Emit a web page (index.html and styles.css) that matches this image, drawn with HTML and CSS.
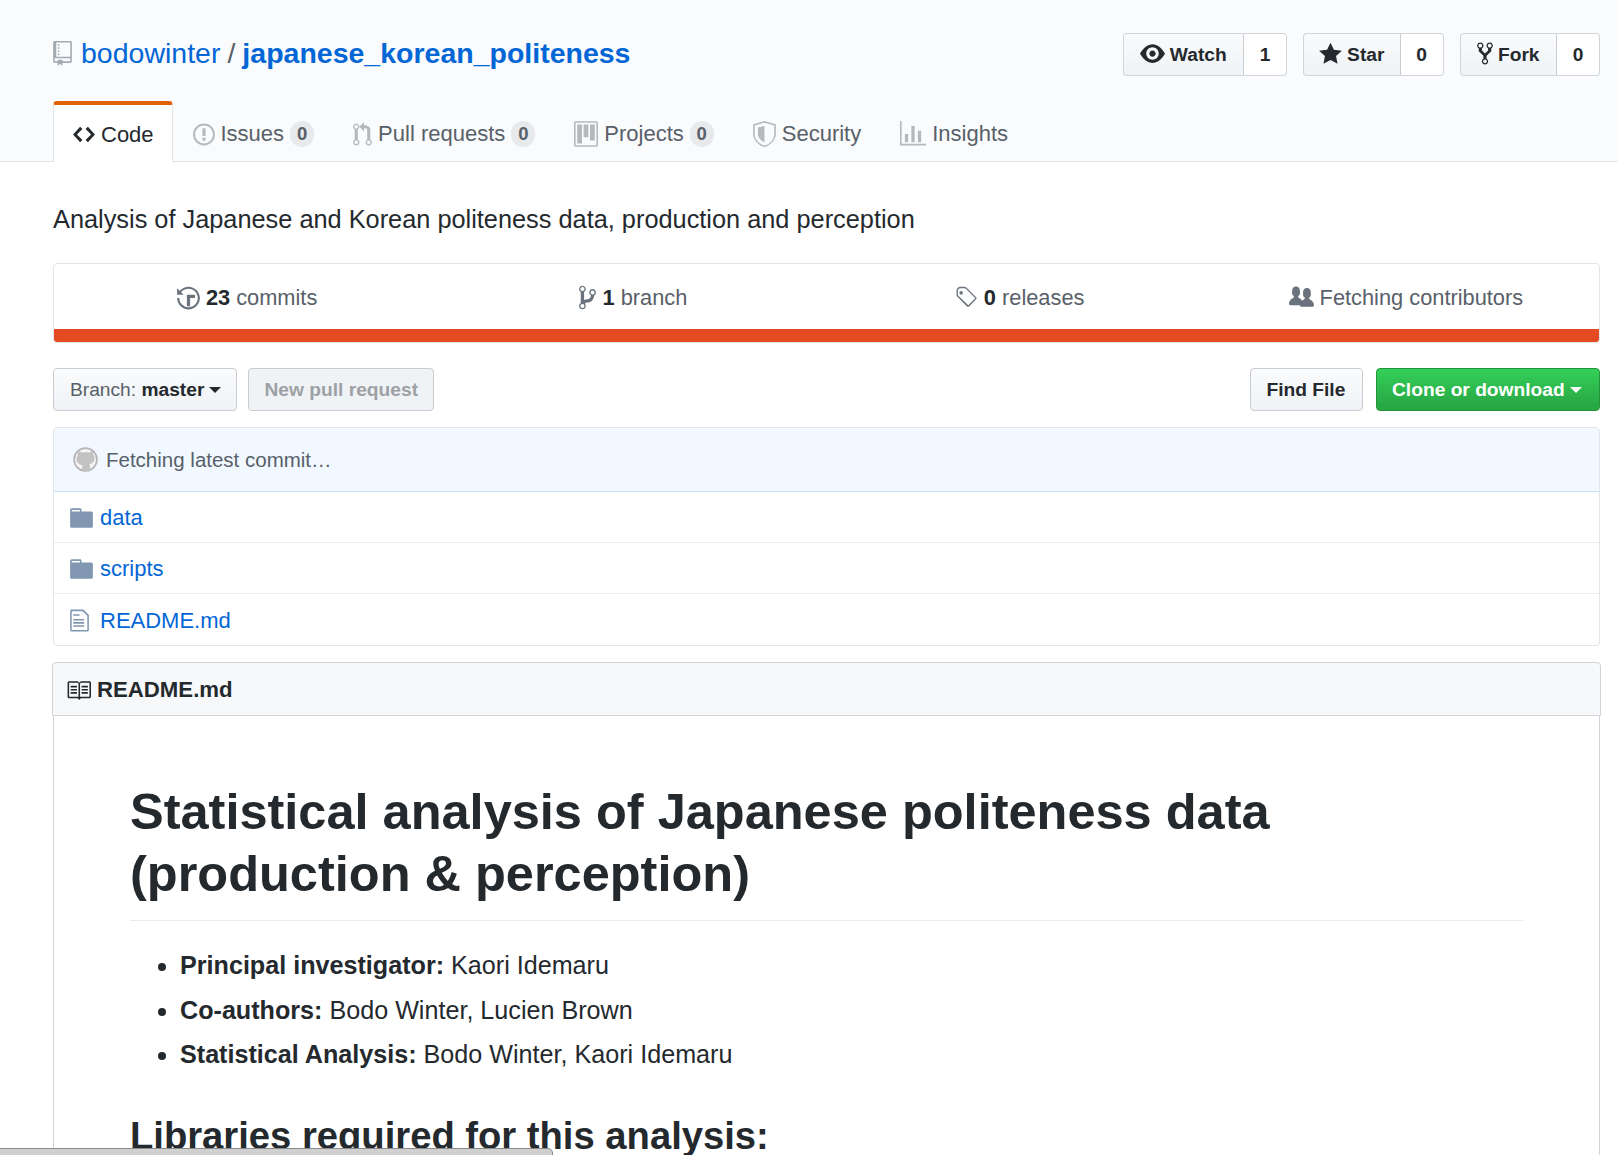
FILE: index.html
```html
<!DOCTYPE html>
<html lang="en">
<head>
<meta charset="utf-8">
<title>japanese_korean_politeness</title>
<link rel="stylesheet" href="styles.css">
</head>
<body>
<header class="repohead">
  <div class="head-top">
    <h1 class="title">
      <svg class="ico repo-ico" viewBox="0 0 12 16"><path fill="#a3aab1" fill-rule="evenodd" d="M4 9H3V8h1v1zm0-3H3v1h1V6zm0-2H3v1h1V4zm0-2H3v1h1V2zm8-1v12c0 .55-.45 1-1 1H6v2l-1.5-1.5L3 16v-2H1c-.55 0-1-.45-1-1V1c0-.55.45-1 1-1h10c.55 0 1 .45 1 1zm-1 10H1v2h2v-1h3v1h5v-2zm0-10H2v9h9V1z"/></svg>
      <a class="owner">bodowinter</a><span class="sep">/</span><a class="name">japanese_korean_politeness</a>
    </h1>
    <div class="actions">
      <div class="social w-watch"><span class="s-btn"><svg class="ico eye" viewBox="0 0 16 16"><path fill="#24292e" fill-rule="evenodd" d="M8.060 2C3 2 0 8 0 8s3 6 8.060 6C13 14 16 8 16 8s-3-6-7.940-6zM8 12c-2.200 0-4-1.780-4-4 0-2.200 1.800-4 4-4 2.220 0 4 1.800 4 4 0 2.220-1.780 4-4 4zm2-4c0 1.110-.890 2-2 2-1.110 0-2-.890-2-2 0-1.110.890-2 2-2 1.110 0 2 .890 2 2z"/></svg>Watch</span><span class="s-count">1</span></div>
      <div class="social w-star"><span class="s-btn"><svg class="ico star" viewBox="0 0 14 16"><path fill="#24292e" fill-rule="evenodd" d="M14 6l-4.900-.640L7 1 4.900 5.360 0 6l3.600 3.260L2.670 14 7 11.670 11.330 14l-.930-4.740L14 6z"/></svg>Star</span><span class="s-count">0</span></div>
      <div class="social w-fork"><span class="s-btn"><svg class="ico fork" viewBox="0 0 10 16"><path fill="#24292e" fill-rule="evenodd" d="M8 1a1.993 1.993 0 0 0-1 3.720V6L5 8 3 6V4.720A1.993 1.993 0 0 0 2 1a1.993 1.993 0 0 0-1 3.720V6.500l3 3v1.780A1.993 1.993 0 0 0 5 15a1.993 1.993 0 0 0 1-3.720V9.500l3-3V4.720A1.993 1.993 0 0 0 8 1zM2 4.200C1.340 4.200.8 3.650.8 3c0-.650.550-1.200 1.200-1.200.650 0 1.200.550 1.200 1.200 0 .650-.550 1.200-1.200 1.200zm3 10c-.660 0-1.200-.550-1.200-1.200 0-.650.550-1.200 1.200-1.200.650 0 1.200.550 1.200 1.200 0 .650-.550 1.200-1.200 1.200zm3-10c-.660 0-1.200-.550-1.200-1.200 0-.650.550-1.200 1.200-1.200.650 0 1.200.550 1.200 1.200 0 .650-.550 1.200-1.200 1.200z"/></svg>Fork</span><span class="s-count">0</span></div>
    </div>
  </div>
  <nav class="tabs">
    <a class="tab selected"><svg class="ico t-code" viewBox="0 0 14 16"><path fill="#24292e" fill-rule="evenodd" d="M9.500 3L8 4.500 11.500 8 8 11.500 9.500 13 14 8 9.500 3zm-5 0L0 8l4.500 5L6 11.500 2.500 8 6 4.500 4.500 3z"/></svg>Code</a>
    <a class="tab"><svg class="ico t-issue" viewBox="0 0 14 16"><path fill="#b6b9bc" fill-rule="evenodd" d="M7 2.300c3.140 0 5.700 2.560 5.700 5.700s-2.560 5.700-5.700 5.700A5.710 5.710 0 0 1 1.300 8c0-3.140 2.560-5.700 5.700-5.700zM7 1C3.140 1 0 4.140 0 8s3.140 7 7 7 7-3.140 7-7-3.140-7-7-7zm1 3H6v5h2V4zm0 6H6v2h2v-2z"/></svg>Issues<span class="counter">0</span></a>
    <a class="tab"><svg class="ico t-pr" viewBox="0 0 12 16"><path fill="#b6b9bc" fill-rule="evenodd" d="M11 11.280V5c-.030-.780-.340-1.470-.940-2.060C9.460 2.350 8.780 2.030 8 2H7V0L4 3l3 3V4h1c.270.020.480.110.690.310.210.200.300.420.310.690v6.280A1.993 1.993 0 0 0 10 15a1.993 1.993 0 0 0 1-3.720zm-1 2.920c-.660 0-1.200-.550-1.200-1.200 0-.650.550-1.200 1.200-1.200.650 0 1.200.550 1.200 1.200 0 .650-.550 1.200-1.200 1.200zM4 3c0-1.110-.890-2-2-2a1.993 1.993 0 0 0-1 3.720v6.560A1.993 1.993 0 0 0 2 15a1.993 1.993 0 0 0 1-3.720V4.720c.590-.340 1-.980 1-1.720zm-.800 10c0 .660-.550 1.200-1.200 1.200-.650 0-1.200-.550-1.200-1.200 0-.650.550-1.200 1.200-1.200.650 0 1.200.550 1.200 1.200zM2 4.200C1.340 4.200.8 3.650.8 3c0-.650.550-1.200 1.200-1.200.650 0 1.200.550 1.200 1.200 0 .650-.550 1.200-1.200 1.200z"/></svg>Pull requests<span class="counter">0</span></a>
    <a class="tab"><svg class="ico t-proj" viewBox="0 0 15 16"><path fill="#b6b9bc" fill-rule="evenodd" d="M10 12h3V2h-3v10zm-4-2h3V2H6v8zm-4 4h3V2H2v12zm-1 1h13V1H1v14zM14 0H1a1 1 0 0 0-1 1v14a1 1 0 0 0 1 1h13a1 1 0 0 0 1-1V1a1 1 0 0 0-1-1z"/></svg>Projects<span class="counter">0</span></a>
    <a class="tab"><svg class="ico t-sec" viewBox="0 0 14 16"><path fill="#b6b9bc" fill-rule="evenodd" d="M0 2l7-2 7 2v6.020C14 12.690 8.670 16 7 16c-1.670 0-7-3.310-7-7.980V2zm1 .750L7 1l6 1.750v5.680c0 3.880-4.540 6.570-6 6.570S1 12.310 1 8.430V2.750zM3 4l4-1v10c-1.110 0-4-2.110-4-4.930V4z"/></svg>Security</a>
    <a class="tab"><svg class="ico t-ins" viewBox="0 0 16 16"><path fill="#b6b9bc" fill-rule="evenodd" d="M16 14v1H0V0h1v14h15zM5 13H3V8h2v5zm4 0H7V3h2v10zm4 0h-2V6h2v7z"/></svg>Insights</a>
  </nav>
</header>

<main class="container">
  <p class="desc">Analysis of Japanese and Korean politeness data, production and perception</p>

  <section class="overall">
    <ul class="stats">
      <li><svg class="ico st-hist" viewBox="0 0 14 16"><path fill="#6a737d" fill-rule="evenodd" d="M8 13H6V6h5v2H8v5zM7 1C4.810 1 2.870 2.020 1.590 3.590L0 2v4h4L2.460 4.460C3.460 3.170 5.130 2.300 7 2.300c3.140 0 5.700 2.560 5.700 5.700s-2.560 5.700-5.700 5.700A5.710 5.710 0 0 1 1.300 8H0c0 3.860 3.140 7 7 7s7-3.140 7-7-3.140-7-7-7z"/></svg><b>23</b> commits</li>
      <li><svg class="ico st-branch" viewBox="0 0 10 16"><path fill="#6a737d" fill-rule="evenodd" d="M10 5c0-1.110-.890-2-2-2a1.993 1.993 0 0 0-1 3.720v.300c-.020.520-.230.980-.630 1.380-.400.400-.860.610-1.380.630-.830.020-1.480.160-2 .450V4.720A1.993 1.993 0 0 0 2 1a1.993 1.993 0 0 0-1 3.720v6.560c-.590.350-1 .990-1 1.720 0 1.110.890 2 2 2 1.110 0 2-.890 2-2 0-.530-.200-1-.530-1.360.090-.060.480-.410.590-.470.250-.110.560-.170.940-.170 1.050-.050 1.950-.450 2.750-1.250S8.950 7.770 9 6.730h-.020C9.590 6.370 10 5.730 10 5zM2 1.800c.660 0 1.200.550 1.200 1.200 0 .650-.550 1.200-1.200 1.200C1.350 4.200.8 3.650.8 3c0-.650.550-1.200 1.200-1.200zm0 12.410c-.660 0-1.200-.550-1.200-1.200 0-.650.550-1.200 1.200-1.200.650 0 1.200.550 1.200 1.200 0 .650-.550 1.200-1.200 1.200zm6-8c-.660 0-1.200-.550-1.200-1.200 0-.650.550-1.200 1.200-1.200.650 0 1.200.550 1.200 1.200 0 .650-.550 1.200-1.200 1.200z"/></svg><b>1</b> branch</li>
      <li><svg class="ico st-tag" viewBox="0 0 15 16"><path fill="#6a737d" fill-rule="evenodd" d="M7.730 1.730C7.260 1.260 6.620 1 5.960 1H3.500C2.130 1 1 2.130 1 3.500v2.470c0 .660.270 1.300.730 1.770l6.060 6.060c.390.390 1.020.390 1.410 0l4.590-4.590a.996.996 0 0 0 0-1.410L7.730 1.730zM2.380 7.090c-.310-.300-.480-.710-.480-1.120V3.500c0-.880.720-1.600 1.600-1.600h2.470c.420 0 .830.170 1.130.470l6.140 6.130-4.590 4.590-6.270-6zM3 4h2v2H3V4z"/></svg><b>0</b> releases</li>
      <li><svg class="ico st-org" viewBox="0 0 16 16"><path fill="#6a737d" fill-rule="evenodd" d="M16 12.999c0 .439-.450 1-1 1H7.995c-.539 0-.994-.447-.995-.999H1c-.540 0-1-.561-1-1 0-2.634 3-4 3-4s.229-.409 0-1c-.841-.621-1.058-.590-1-3 .058-2.419 1.367-3 2.500-3s2.442.580 2.500 3c.058 2.410-.159 2.379-1 3-.229.590 0 1 0 1s1.549.711 2.420 2.088C9.196 9.369 10 8.999 10 8.999s.229-.409 0-1c-.841-.620-1.058-.590-1-3 .058-2.419 1.367-3 2.500-3s2.437.581 2.495 3c.059 2.410-.158 2.380-1 3-.229.590 0 1 0 1S16 10.365 16 12.999z"/></svg>Fetching contributors</li>
    </ul>
    <div class="langbar"></div>
  </section>

  <div class="file-nav">
    <a class="btn branch-btn">Branch: <b>master</b><i class="caret"></i></a>
    <a class="btn disabled">New pull request</a>
    <span class="spacer"></span>
    <a class="btn find">Find File</a>
    <a class="btn primary">Clone or download<i class="caret"></i></a>
  </div>

  <section class="files">
    <div class="tease">
      <span class="avatar"><svg viewBox="0 0 16 16"><circle cx="8" cy="8" r="7.300" fill="#f4f4f4" stroke="#b4b4b4" stroke-width="1.100"/><path fill="#c2c2c2" d="M3.200 2.600c1 0 1.900.6 2.500 1.100.7-.2 1.500-.3 2.300-.3s1.600.1 2.300.3c.6-.5 1.500-1.100 2.500-1.100.3.8.3 1.600.1 2.200.6.7.9 1.500.9 2.400 0 2.600-1.700 3.500-3.500 3.800.3.4.5.9.5 1.500v3H5.800v-2.200c0-.5.2-1 .5-1.600-1.800-.3-4.100-1.400-4.100-4.100 0-.9.3-1.700.9-2.400-.2-.6-.2-1.500.1-2.600z"/></svg></span>
      <span>Fetching latest commit…</span>
    </div>
    <div class="row"><svg class="ico f-dir" viewBox="0 0 14 16"><path fill="#8197b1" fill-rule="evenodd" d="M13 4H7V3c0-.660-.310-1-1-1H1c-.550 0-1 .450-1 1v10c0 .550.450 1 1 1h12c.550 0 1-.450 1-1V5c0-.550-.450-1-1-1zM6 4H1V3h5v1z"/></svg><a>data</a></div>
    <div class="row"><svg class="ico f-dir" viewBox="0 0 14 16"><path fill="#8197b1" fill-rule="evenodd" d="M13 4H7V3c0-.660-.310-1-1-1H1c-.550 0-1 .450-1 1v10c0 .550.450 1 1 1h12c.550 0 1-.450 1-1V5c0-.550-.450-1-1-1zM6 4H1V3h5v1z"/></svg><a>scripts</a></div>
    <div class="row"><svg class="ico f-file" viewBox="0 0 12 16"><path fill="#8197b1" fill-rule="evenodd" d="M6 5H2V4h4v1zM2 8h7V7H2v1zm0 2h7V9H2v1zm0 2h7v-1H2v1zm10-7.500V14c0 .550-.450 1-1 1H1c-.550 0-1-.450-1-1V2c0-.550.450-1 1-1h7.500L12 4.500zM11 5L8 2H1v12h10V5z"/></svg><a>README.md</a></div>
  </section>

  <section class="readme">
    <h3 class="readme-head"><svg class="ico r-book" viewBox="0 0 16 16"><path fill="#24292e" fill-rule="evenodd" d="M3 5h4v1H3V5zm0 3h4V7H3v1zm0 2h4V9H3v1zm11-5h-4v1h4V5zm0 2h-4v1h4V7zm0 2h-4v1h4V9zm2-6v9c0 .550-.450 1-1 1H9.500l-1 1-1-1H2c-.550 0-1-.450-1-1V3c0-.550.450-1 1-1h5.500l1 1 1-1H15c.550 0 1 .450 1 1zm-8 .500L7.500 3H2v9h6V3.500zm7-.500H9.500l-.500.500V12h6V3z"/></svg>README.md</h3>
    <article class="md">
      <h1>Statistical analysis of Japanese politeness data (production &amp; perception)</h1>
      <ul>
        <li><strong>Principal investigator:</strong> Kaori Idemaru</li>
        <li><strong>Co-authors:</strong> Bodo Winter, Lucien Brown</li>
        <li><strong>Statistical Analysis:</strong> Bodo Winter, Kaori Idemaru</li>
      </ul>
      <h2>Libraries required for this analysis:</h2>
    </article>
  </section>
</main>
<div class="status"></div>
</body>
</html>
```
FILE: styles.css
```css
* { box-sizing: border-box; }
html, body { margin: 0; padding: 0; height: 1155px; overflow: hidden; background: #fff; }
body { font-family: "Liberation Sans", Arial, sans-serif; font-size: 21.8px; color: #24292e; position: relative; }
a { color: #0366d6; text-decoration: none; }
ul { list-style: none; margin: 0; padding: 0; }
.ico { display: block; flex: none; }

.repohead { height: 162px; background: #fafbfc; border-bottom: 1px solid #e1e4e8; padding: 33px 18px 0 53px; }
.head-top { display: flex; justify-content: space-between; height: 43px; }
.title { margin: 0; font-size: 28.5px; font-weight: 400; display: flex; align-items: center; height: 41px; color: #586069; }
.repo-ico { width: 19px; height: 25px; margin-right: 9px; }
.sep { margin: 0 7px; }
.name { font-weight: 700; }
.actions { display: flex; gap: 16px; }
.social { display: flex; height: 43px; font-size: 19.2px; font-weight: 700; }
.s-btn { display: flex; align-items: center; justify-content: center; gap: 5px; background: linear-gradient(#fafbfc, #eff3f6); border: 1px solid #d1d5da; border-right: 1px solid #c9ccd0; border-radius: 4px 0 0 4px; }
.s-count { display: flex; align-items: center; justify-content: center; background: #fff; border: 1px solid #d1d5da; border-left: 0; border-radius: 0 4px 4px 0; }
.s-btn .ico { margin-bottom: 2px; }
.w-watch .s-btn { width: 121.5px; } .w-watch .s-count { width: 43px; }
.w-star .s-btn { width: 97.5px; } .w-star .s-count { width: 43px; }
.w-fork .s-btn { width: 97.5px; } .w-fork .s-count { width: 43px; }
.eye { width: 25px; height: 25px; }
.star { width: 23px; height: 26px; }
.fork { width: 16px; height: 25px; }

.tabs { display: flex; margin-top: 25px; height: 60px; font-size: 22px; }
.tab { display: flex; align-items: center; color: #586069; height: 60px; padding: 2px 19.5px 0; border-top: 4px solid transparent; }
.tab.selected { width: 120px; height: 61px; padding-left: 19px; background: #fff; color: #24292e; border: 1px solid #e1e4e8; border-top: 4px solid #e36209; border-bottom: 0; border-radius: 4px 4px 0 0; }
.tab .ico { margin-right: 6px; }
.t-code { width: 22px; height: 25px; }
.t-issue { width: 22px; height: 25px; }
.t-pr { width: 19px; height: 25px; }
.t-proj { width: 24px; height: 26px; }
.t-sec { width: 23px; height: 26px; }
.t-ins { width: 26px; height: 26px; }
.counter { display: inline-flex; align-items: center; justify-content: center; width: 24px; height: 26px; margin-left: 6px; border-radius: 13px; background: rgba(27,31,35,.08); font-size: 18.5px; font-weight: 700; color: #586069; }

.container { padding: 0 18px 0 53px; }
.desc { margin: 0; height: 101px; padding-top: 40px; font-size: 25.33px; line-height: 35px; color: #24292e; }
.overall { height: 80px; border: 1px solid #e1e4e8; border-radius: 4px; overflow: hidden; display: flex; flex-direction: column; }
.stats { display: grid; grid-template-columns: repeat(4, 1fr); height: 65px; padding-top: 2px; color: #586069; flex: none; }
.stats li { display: flex; align-items: center; justify-content: center; white-space: pre; }
.stats b { color: #24292e; }
.stats .ico { margin-right: 6px; }
.st-hist { width: 23px; height: 26px; }
.st-branch { width: 17px; height: 27px; }
.st-tag { width: 23px; height: 25px; }
.st-org { width: 25px; height: 25px; }
.langbar { flex: 1; background: #e44b23; }

.file-nav { display: flex; gap: 10.5px; margin-top: 25px; height: 43px; }
.spacer { flex: 1; }
.btn { display: flex; align-items: center; height: 43px; padding: 0 16px; font-size: 19.2px; font-weight: 700; color: #24292e; background: linear-gradient(#fafbfc, #eff3f6); border: 1px solid #c9ccd0; border-radius: 4px; white-space: pre; }
.branch-btn { width: 184px; font-weight: 400; color: #586069; }
.branch-btn b { color: #24292e; }
.caret { display: block; width: 0; height: 0; margin-left: 5px; border: 6.300px solid transparent; border-top-color: currentColor; border-bottom: 0; color: #24292e; }
.btn.disabled { width: 186.5px; color: #9da1a5; background: #eff3f6; }
.find { width: 113px; margin-right: 3px; }
.primary { width: 224px; padding: 0 15px; color: #fff; background: linear-gradient(#34d058, #28a745 90%); border-color: #23933c; }
.primary .caret { color: #fff; }

.files { margin-top: 16px; border: 1px solid #e1e4e8; border-radius: 4px; overflow: hidden; }
.tease { display: flex; align-items: center; gap: 8px; height: 65px; padding-left: 19px; margin: -1px -1px 0; background: #f1f8ff; border: 1px solid #c8e1ff; color: #586069; font-size: 20.5px; }
.avatar { width: 25px; height: 25px; border-radius: 50%; display: block; }
.avatar svg { display: block; width: 25px; height: 25px; }
.row { display: flex; align-items: center; height: 51px; padding: 2px 0 0 16px; border-bottom: 1px solid #eaecef; font-size: 22px; }
.row:last-child { border-bottom: 0; }
.f-dir { width: 23px; height: 26px; margin-right: 7px; }
.f-file { width: 19px; height: 25px; margin: 0 11px 0 0; }

.readme { margin: 16px -1px 0; }
.readme-head { margin: 0; display: flex; align-items: center; height: 54px; padding: 2px 0 0 13px; background: #f6f8fa; border: 1px solid #d1d5da; border-radius: 4px 4px 0 0; font-size: 22.2px; gap: 6px; }
.r-book { width: 25px; height: 25px; }
.md { margin: 0 1px; height: 600px; padding: 65px 76px 0; border: 1px solid #d1d5da; border-top: 0; }
.md h1 { margin: 0 0 26px; padding-bottom: 15px; font-size: 50.5px; line-height: 62px; font-weight: 700; border-bottom: 1px solid #eaecef; }
.md ul { list-style: disc; padding-left: 50px; font-size: 25.15px; line-height: 36px; }
.md li { margin-bottom: 8.5px; }
.md h2 { margin: 41px 0 0; font-size: 38.2px; line-height: 45px; }

.status { position: absolute; left: -2px; top: 1148px; width: 555px; height: 30px; background: #d0d0d0; border: 1px solid #8a8a8a; border-radius: 0 5px 0 0; }
```
